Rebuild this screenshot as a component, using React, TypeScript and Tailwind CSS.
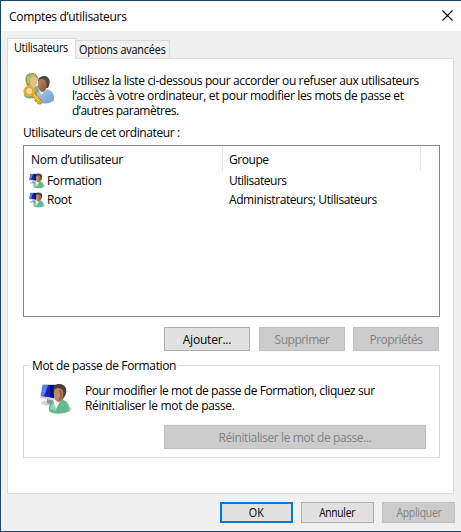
import type { ReactNode } from 'react';

function Button({ children, className, disabled }: { children: ReactNode; className: string; disabled?: boolean }) {
  return (
    <button
      disabled={disabled}
      className={`flex items-center justify-center whitespace-nowrap ${disabled ? 'border border-[#bfbfbf] bg-[#cccccc] text-[#838383]' : 'bg-[#e1e1e1] text-black'} ${className}`}
    >
      {children}
    </button>
  );
}

function UsersIcon() {
  return (
    <svg width="32" height="32" viewBox="0 0 32 32">
      <defs>
        <linearGradient id="green" x1="0" y1="0" x2="1" y2="1">
          <stop offset="0" stopColor="#a9cfa4" />
          <stop offset="1" stopColor="#5f9a6d" />
        </linearGradient>
        <linearGradient id="blue" x1="0" y1="0" x2="1" y2="1">
          <stop offset="0" stopColor="#b5d2f0" />
          <stop offset="1" stopColor="#6c98cf" />
        </linearGradient>
        <linearGradient id="skin" x1="0" y1="0" x2="1" y2="1">
          <stop offset="0" stopColor="#c08a68" />
          <stop offset="1" stopColor="#85543c" />
        </linearGradient>
      </defs>
      <path d="M1 23C0 17 2 13 7 12l8 1 2 9-6 3C6 26 2 25 1 23Z" fill="url(#green)" />
      <path d="M3 10C1 4 4 0 9 0c5 0 7 4 5 9l-3 5-6 1Z" fill="#8e9f46" />
      <path d="M7 6c1-3 6-3 7-1 1 4-1 10-4 10-3-1-4-5-3-9Z" fill="#e8bd92" />
      <path d="M4 4c2-3 7-4 9-1L8 5 6 11 4 9Z" fill="#b9bd6d" />
      <path d="M13 27c-1-7 3-11 9-11 7 0 10 6 9 11-3 4-14 5-18 0Z" fill="url(#blue)" />
      <path d="m16 16 2 6 6-6Z" fill="#e8f0f8" />
      <path d="M15 8c0-4 4-5 7-5 5 1 6 6 3 12h-3Z" fill="#51443d" />
      <path d="M15 9c1-3 4-4 7-2 2 2 2 6 1 9-1 2-2 3-4 3-3-1-5-6-4-10Z" fill="url(#skin)" />
      <path d="m9 21 2-2 8 9-1 3h-3l-1-2-2-1v-2l-3-3Z" fill="#f5aa22" stroke="#b87508" strokeWidth=".7" />
      <circle cx="6.2" cy="18" r="4.4" fill="#f6dc9c" stroke="#e59d20" strokeWidth="2.6" />
      <circle cx="6" cy="17.7" r="4.8" fill="none" stroke="#f8c552" strokeWidth=".8" />
      <path d="m11 22 5 6" stroke="#ffe28d" strokeWidth="1" />
    </svg>
  );
}

function UserIcon({ size }: { size: number }) {
  return (
    <svg width={size} height={size} viewBox="0 0 32 32" className="shrink-0">
      <ellipse cx="8" cy="20" rx="7" ry="2.5" fill="#d0d3d8" />
      <path d="m7 16 6 1 1 6-7-3Z" fill="#8f969f" />
      <path d="m2 1 16 0-3 16L0 15Z" fill="#ccd3dd" />
      <path d="m3 2 13 0-2 13L1 13Z" fill="#1528b5" />
      <path d="m10 2 6 0-2 13-4-1Z" fill="#040c86" />
      <path d="M3 2h5L4 13.5 1 13Z" fill="#567ff0" />
      <ellipse cx="26" cy="26" rx="5.5" ry="3.5" fill="#c8ceca" />
      <path d="M9 28c-1-6 3-12 9-12 9 0 12 6 11 12-4 3-16 4-20 0Z" fill="#63b88e" />
      <path d="M10 26c1-5 4-7 7-8l-1 10Z" fill="#93d6b6" />
      <path d="m13 17 3 9 5-9Z" fill="#f4f8f6" />
      <path d="M13 7c0-4 3-6 6-6 7 0 9 6 6 12l-3 4-5-5Z" fill="#4c3d34" />
      <path d="M14 8c1-4 7-4 9 0 1 5-1 11-5 11-3-1-5-7-4-11Z" fill="#ba8965" />
      <path d="M21 7c2 3 2 7 0 10-1 1-2 2-3 2 2-4 3-8 1-12Z" fill="#926449" />
    </svg>
  );
}

const users = [
  { name: 'Formation', nameClass: 'tracking-[-0.38px]', group: 'Utilisateurs', groupClass: 'tracking-[-0.5px]' },
  { name: 'Root', nameClass: 'tracking-[-0.4px]', group: 'Administrateurs; Utilisateurs', groupClass: 'tracking-[-0.41px]' },
];

export default function App() {
  return (
    <div className="flex h-[532px] w-[461px] flex-col border-t border-b border-l border-[#17486b] bg-[#f0f0f0] font-['Open_Sans','Noto_Sans',sans-serif] text-[12px] leading-[15px] text-black">
      <header className="flex h-[30px] items-center justify-between bg-white pr-[8px] pl-[8px]">
        <h1 className="tracking-[-0.32px]">Comptes d’utilisateurs</h1>
        <svg width="11" height="11" viewBox="0 0 11 11" className="-mt-[2px]">
          <path d="m.5.5 10 10m0-10-10 10" stroke="#000" strokeWidth="1.1" />
        </svg>
      </header>

      <nav className="mt-[7px] ml-[6px] flex h-[20px] items-end">
        <div className="z-10 -mb-px flex h-[21px] w-[69px] border border-b-0 border-[#d9d9d9] bg-white pt-px pl-[6px] whitespace-nowrap">
          <span className="origin-left scale-x-90 tracking-[-0.3px]">Utilisateurs</span>
        </div>
        <div className="flex h-[18px] w-[94px] border border-b-0 border-l-0 border-[#d9d9d9] bg-[#f0f0f0] pt-px pl-[3px] whitespace-nowrap">
          <span className="origin-left scale-x-90 tracking-[-0.17px]">Options avancées</span>
        </div>
      </nav>

      <main className="ml-[6px] h-[436px] w-[447px] border border-[#dcdcdc] bg-white pl-[15px]">
        <div className="flex h-[66px] pt-[14px]">
          <div className="w-[49px]"><UsersIcon /></div>
          <p className="whitespace-nowrap">
            <span className="block tracking-[-0.37px]">Utilisez la liste ci-dessous pour accorder ou refuser aux utilisateurs</span>
            <span className="block tracking-[-0.36px]">l’accès à votre ordinateur, et pour modifier les mots de passe et</span>
            <span className="block tracking-[-0.49px]">d’autres paramètres.</span>
          </p>
        </div>
        <div className="flex h-[20px] items-start tracking-[-0.41px] whitespace-nowrap">Utilisateurs de cet ordinateur :</div>

        <section className="h-[172px] w-[417px] border border-[#828790] bg-white pt-px">
          <div className="flex h-[24px] items-center">
            <div className="flex h-full w-[199px] items-center border-r border-[#e5e5e5] pl-[7px] tracking-[-0.25px]">Nom d’utilisateur</div>
            <div className="flex h-full w-[198px] items-center border-r border-[#e5e5e5] pl-[6px] tracking-[-0.45px]">Groupe</div>
          </div>
          {users.map((user) => (
            <div key={user.name} className="flex h-[19px] items-center whitespace-nowrap">
              <div className="flex w-[205px] items-center gap-[2px] pl-[5px]">
                <UserIcon size={16} />
                <span className={user.nameClass}>{user.name}</span>
              </div>
              <span className={user.groupClass}>{user.group}</span>
            </div>
          ))}
        </section>

        <div className="mt-[10px] flex h-[24px] pl-[141px]">
          <Button className="w-[86px] border border-[#adadad] tracking-[-0.2px]">Ajouter...</Button>
          <Button disabled className="ml-[9px] w-[86px] tracking-[-0.5px]">Supprimer</Button>
          <Button disabled className="ml-[8px] w-[86px] tracking-[-0.5px]">Propriétés</Button>
        </div>

        <fieldset className="mt-[7px] h-[100px] w-[417px] border border-[#dcdcdc]">
          <legend className="ml-[6px] h-[15px] w-[149px] pl-[2px] tracking-[-0.36px] whitespace-nowrap">Mot de passe de Formation</legend>
          <div className="mt-[10px] flex h-[42px]">
            <div className="w-[61px] pl-[16px]"><UserIcon size={32} /></div>
            <p className="whitespace-nowrap">
              <span className="block tracking-[-0.42px]">Pour modifier le mot de passe de Formation, cliquez sur</span>
              <span className="block tracking-[-0.32px]">Réinitialiser le mot de passe.</span>
            </p>
          </div>
          <Button disabled className="ml-[140px] h-[24px] w-[262px] tracking-[-0.39px]">Réinitialiser le mot de passe...</Button>
        </fieldset>
      </main>

      <footer className="mt-[8px] ml-[219px] flex h-[21px] gap-[8px]">
        <Button className="w-[73px] border-2 border-[#0078d7]"><span className="inline-block scale-x-90">OK</span></Button>
        <Button className="w-[73px] border border-[#adadad] tracking-[-0.3px]"><span className="inline-block scale-x-[0.85]">Annuler</span></Button>
        <Button disabled className="w-[73px] tracking-[-0.3px]"><span className="inline-block scale-x-[0.87]">Appliquer</span></Button>
      </footer>
    </div>
  );
}
